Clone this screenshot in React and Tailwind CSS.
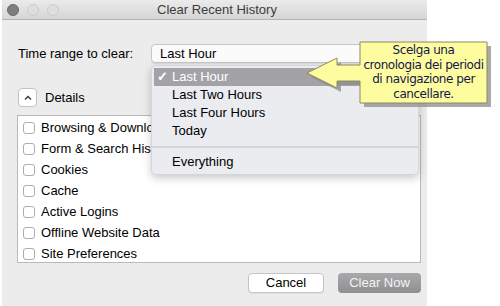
import React from "react";

const items = [
  "Browsing & Download History",
  "Form & Search History",
  "Cookies",
  "Cache",
  "Active Logins",
  "Offline Website Data",
  "Site Preferences",
];

export default function App() {
  return (
    <div className="relative w-[500px] h-[306px] bg-white overflow-hidden font-['Liberation_Sans',Arial,sans-serif] text-[13px] text-black">
      <div className="ml-[2px] w-[425px] h-[306px] bg-[#ececec] flex flex-col">
        {/* title bar */}
        <div className="relative h-[20px] shrink-0 border-b border-[#b4b4b4] bg-gradient-to-b from-[#ebebeb] to-[#d5d5d5] flex items-center">
          <div className="flex items-center gap-[8px] pl-[5px]">
            <div className="w-[12px] h-[12px] rounded-full bg-[#7e7e80] border border-[#6a6a6c]" />
            <div className="w-[12px] h-[12px] rounded-full bg-[#dedede] border border-[#cbcbcb]" />
            <div className="w-[12px] h-[12px] rounded-full bg-[#dedede] border border-[#cbcbcb]" />
          </div>
          <div className="absolute left-[155px] top-0 h-[19px] flex items-center text-[#3c3c3c]">
            Clear Recent History
          </div>
        </div>

        <div className="flex flex-col pl-[16px] pr-[6px]">
          {/* time range */}
          <div className="mt-[24px] flex items-center h-[19px]">
            <div className="w-[133px] shrink-0">Time range to clear:</div>
            <div className="w-[267px] h-[19px] rounded-[4px] border border-[#c6c6c6] bg-[#fbfbfb] shadow-[0_1px_0_rgba(0,0,0,0.06)] flex items-center pl-[8px]">
              Last Hour
            </div>
          </div>

          {/* details */}
          <div className="mt-[25px] flex items-center h-[19px]">
            <div className="w-[19px] h-[19px] rounded-[4px] border border-[#c3c3c3] bg-white flex items-center justify-center">
              <svg width="8" height="6" viewBox="0 0 8 6">
                <path d="M1 4.5 L4 1.5 L7 4.5" fill="none" stroke="#333" strokeWidth="1.3" />
              </svg>
            </div>
            <div className="ml-[8px]">Details</div>
          </div>

          {/* list */}
          <div className="mt-[8px] -ml-[1px] w-[404px] h-[148px] border border-[#b9b9b9] bg-white pt-[1px] flex flex-col">
            {items.map((t) => (
              <div key={t} className="h-[21px] flex items-center pl-[5px] shrink-0">
                <div className="w-[12px] h-[12px] rounded-[3px] border border-[#adadad] bg-white shrink-0" />
                <div className="ml-[6px] whitespace-nowrap">{t}</div>
              </div>
            ))}
          </div>

          {/* buttons */}
          <div className="mt-[10px] flex justify-end gap-[14px]">
            <div className="w-[76px] h-[20px] rounded-[4px] border border-[#c4c4c4] bg-white flex items-center justify-center shadow-[0_1px_0_rgba(0,0,0,0.05)]">
              Cancel
            </div>
            <div className="w-[83px] h-[20px] rounded-[4px] bg-gradient-to-b from-[#a9a9ab] to-[#909092] text-[#f2f2f2] flex items-center justify-center">
              Clear Now
            </div>
          </div>
        </div>
      </div>

      {/* dropdown menu */}
      <div className="absolute left-[151px] top-[65px] w-[268px] h-[110px] rounded-[5px] bg-[#eaecf0] border border-[#d4d6da] shadow-[0_3px_8px_rgba(0,0,0,0.22)] pt-[2px] flex flex-col">
        <div className="ml-[2px] h-[18px] bg-[#a3a3a7] text-white flex items-center">
          <span className="w-[17px] pl-[3px] text-[13px] font-bold">✓</span>
          <span className="pl-[1px]">Last Hour</span>
        </div>
        <div className="h-[18px] flex items-center pl-[20px]">Last Two Hours</div>
        <div className="h-[18px] flex items-center pl-[20px]">Last Four Hours</div>
        <div className="h-[18px] flex items-center pl-[20px]">Today</div>
        <div className="h-[13px] flex items-center">
          <div className="w-full h-[2px] bg-[#d3d5da]" />
        </div>
        <div className="h-[18px] flex items-center pl-[20px]">Everything</div>
      </div>

      {/* callout */}
      <svg className="absolute left-[300px] top-[38px]" width="200" height="75" viewBox="0 0 200 75">
        <path
          d="M11,39 L41,24 L41,31 L64,31 L64,8 L191,8 L191,69 L64,69 L64,47 L41,47 L41,54 Z"
          fill="#8c8c8c"
          opacity="0.75"
        />
        <path
          d="M7,35 L37,20 L37,27 L60,27 L60,4 L187,4 L187,65 L60,65 L60,43 L37,43 L37,50 Z"
          fill="#fdfda0"
          stroke="#8a8a60"
          strokeWidth="1"
        />
      </svg>
      <div className="absolute left-[360px] top-[43px] w-[127px] flex flex-col items-center font-['DejaVu_Sans',sans-serif] text-[12px] tracking-[-0.45px] leading-[14.5px] text-[#16164a]">
        <div>Scelga una</div>
        <div className="whitespace-nowrap">cronologia dei periodi</div>
        <div>di navigazione per</div>
        <div>cancellare.</div>
      </div>
    </div>
  );
}
